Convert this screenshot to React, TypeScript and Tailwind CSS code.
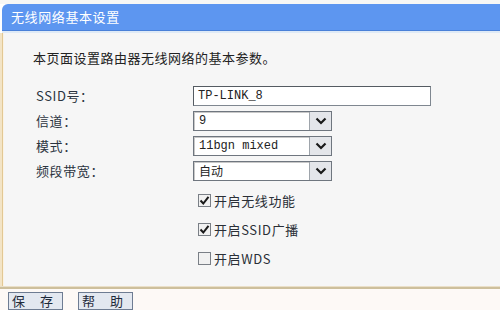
import React from "react";

const cjk = { fontFamily: '"SimSun","Noto Sans CJK SC",sans-serif' };
const mono = { fontFamily: '"Liberation Mono","Noto Sans CJK SC",monospace' };

function Chevron() {
  return (
    <svg width="12" height="8" viewBox="0 0 12 8">
      <path d="M1.5 1.5 L6 6 L10.5 1.5" fill="none" stroke="#1a1a1a" strokeWidth="2.2" />
    </svg>
  );
}

function Select({ value, isMono }: { value: string; isMono?: boolean }) {
  return (
    <div className="flex h-[20px] w-[139px] border border-[#6f767f] bg-white">
      <div
        className="flex-1 flex items-center pl-[4px] text-[12px] text-[#222] border-t border-l border-[#c8c8c8]"
        style={isMono ? mono : cjk}
      >
        {value}
      </div>
      <div className="w-[22px] flex items-center justify-center bg-[#e4e6ea] border-l border-[#9ea4ab]">
        <Chevron />
      </div>
    </div>
  );
}

function Check({ checked, label }: { checked: boolean; label: string }) {
  return (
    <div className="flex items-center h-[29px] pl-[194px]">
      <div className="w-[13px] h-[13px] border border-[#7a7f86] bg-[#f1f1f1] flex items-center justify-center">
        {checked && (
          <svg width="11" height="11" viewBox="0 0 11 11">
            <path d="M1.5 5.5 L4.3 8.5 L9.5 1.8" fill="none" stroke="#1a1a1a" strokeWidth="2" />
          </svg>
        )}
      </div>
      <span className="ml-[3px] text-[13px] tracking-[0.6px] text-[#2a2f36]" style={cjk}>
        {label}
      </span>
    </div>
  );
}

function Row({ label, children }: { label: string; children: React.ReactNode }) {
  return (
    <div className="flex items-center h-[25px]">
      <div className="w-[189px] pl-[32px] text-[13px] tracking-[0.6px] text-[#2b3440]" style={cjk}>
        {label}
      </div>
      {children}
    </div>
  );
}

export default function App() {
  return (
    <div className="w-[500px] h-[310px] bg-white overflow-hidden flex flex-col">
      <div className="h-[4px] bg-[#f7f7f5]" />
      <div className="ml-[2px] h-[28px] bg-[#5d96f0] rounded-tl-[6px] flex items-center pl-[9px] border-b border-[#4a80d8]">
        <span className="text-white text-[13px] tracking-[0.6px]" style={cjk}>
          无线网络基本设置
        </span>
      </div>
      <div className="h-[2px] ml-[2px] bg-[#dfeaf6]" />
      <div className="flex h-[258px]">
        <div className="w-[2px] bg-[#f3e4c6]" />
        <div className="w-[1px] bg-[#e2c894]" />
        <div className="w-[1px] bg-[#fbf3e4]" />
        <div className="flex-1 bg-[#f6f6f6] flex flex-col">
          <div className="pt-[15px] pl-[29px] h-[50px] text-[13px] tracking-[0.5px] text-[#222]" style={cjk}>
            本页面设置路由器无线网络的基本参数。
          </div>
          <div>
            <Row label="SSID号：">
              <div
                className="h-[20px] w-[238px] border border-[#7f8790] bg-white flex items-center pl-[4px] text-[12px] text-[#222] border-t-[#555b62] border-l-[#555b62]"
                style={mono}
              >
                TP-LINK_8
              </div>
            </Row>
            <Row label="信道：">
              <Select value="9" isMono />
            </Row>
            <Row label="模式：">
              <Select value="11bgn mixed" isMono />
            </Row>
            <Row label="频段带宽：">
              <Select value="自动" />
            </Row>
            <div className="h-[3px]" />
            <Check checked label="开启无线功能" />
            <Check checked label="开启SSID广播" />
            <Check checked={false} label="开启WDS" />
          </div>
        </div>
      </div>
      <div className="h-[1px] bg-[#eadfc8]" />
      <div className="h-[2px] bg-[#cdbf9c]" />
      <div className="flex-1 bg-[#fdf9f6] flex items-start pt-[3px] pl-[8px] gap-[15px]">
        <button
          className="w-[55px] h-[18px] border border-[#6e7c92] bg-[#e3e8f0] text-[13px] tracking-[6px] text-[#1f2a3a] leading-[16px]"
          style={cjk}
        >
          保 存
        </button>
        <button
          className="w-[55px] h-[18px] border border-[#6e7c92] bg-[#e3e8f0] text-[13px] tracking-[6px] text-[#1f2a3a] leading-[16px]"
          style={cjk}
        >
          帮 助
        </button>
      </div>
    </div>
  );
}
